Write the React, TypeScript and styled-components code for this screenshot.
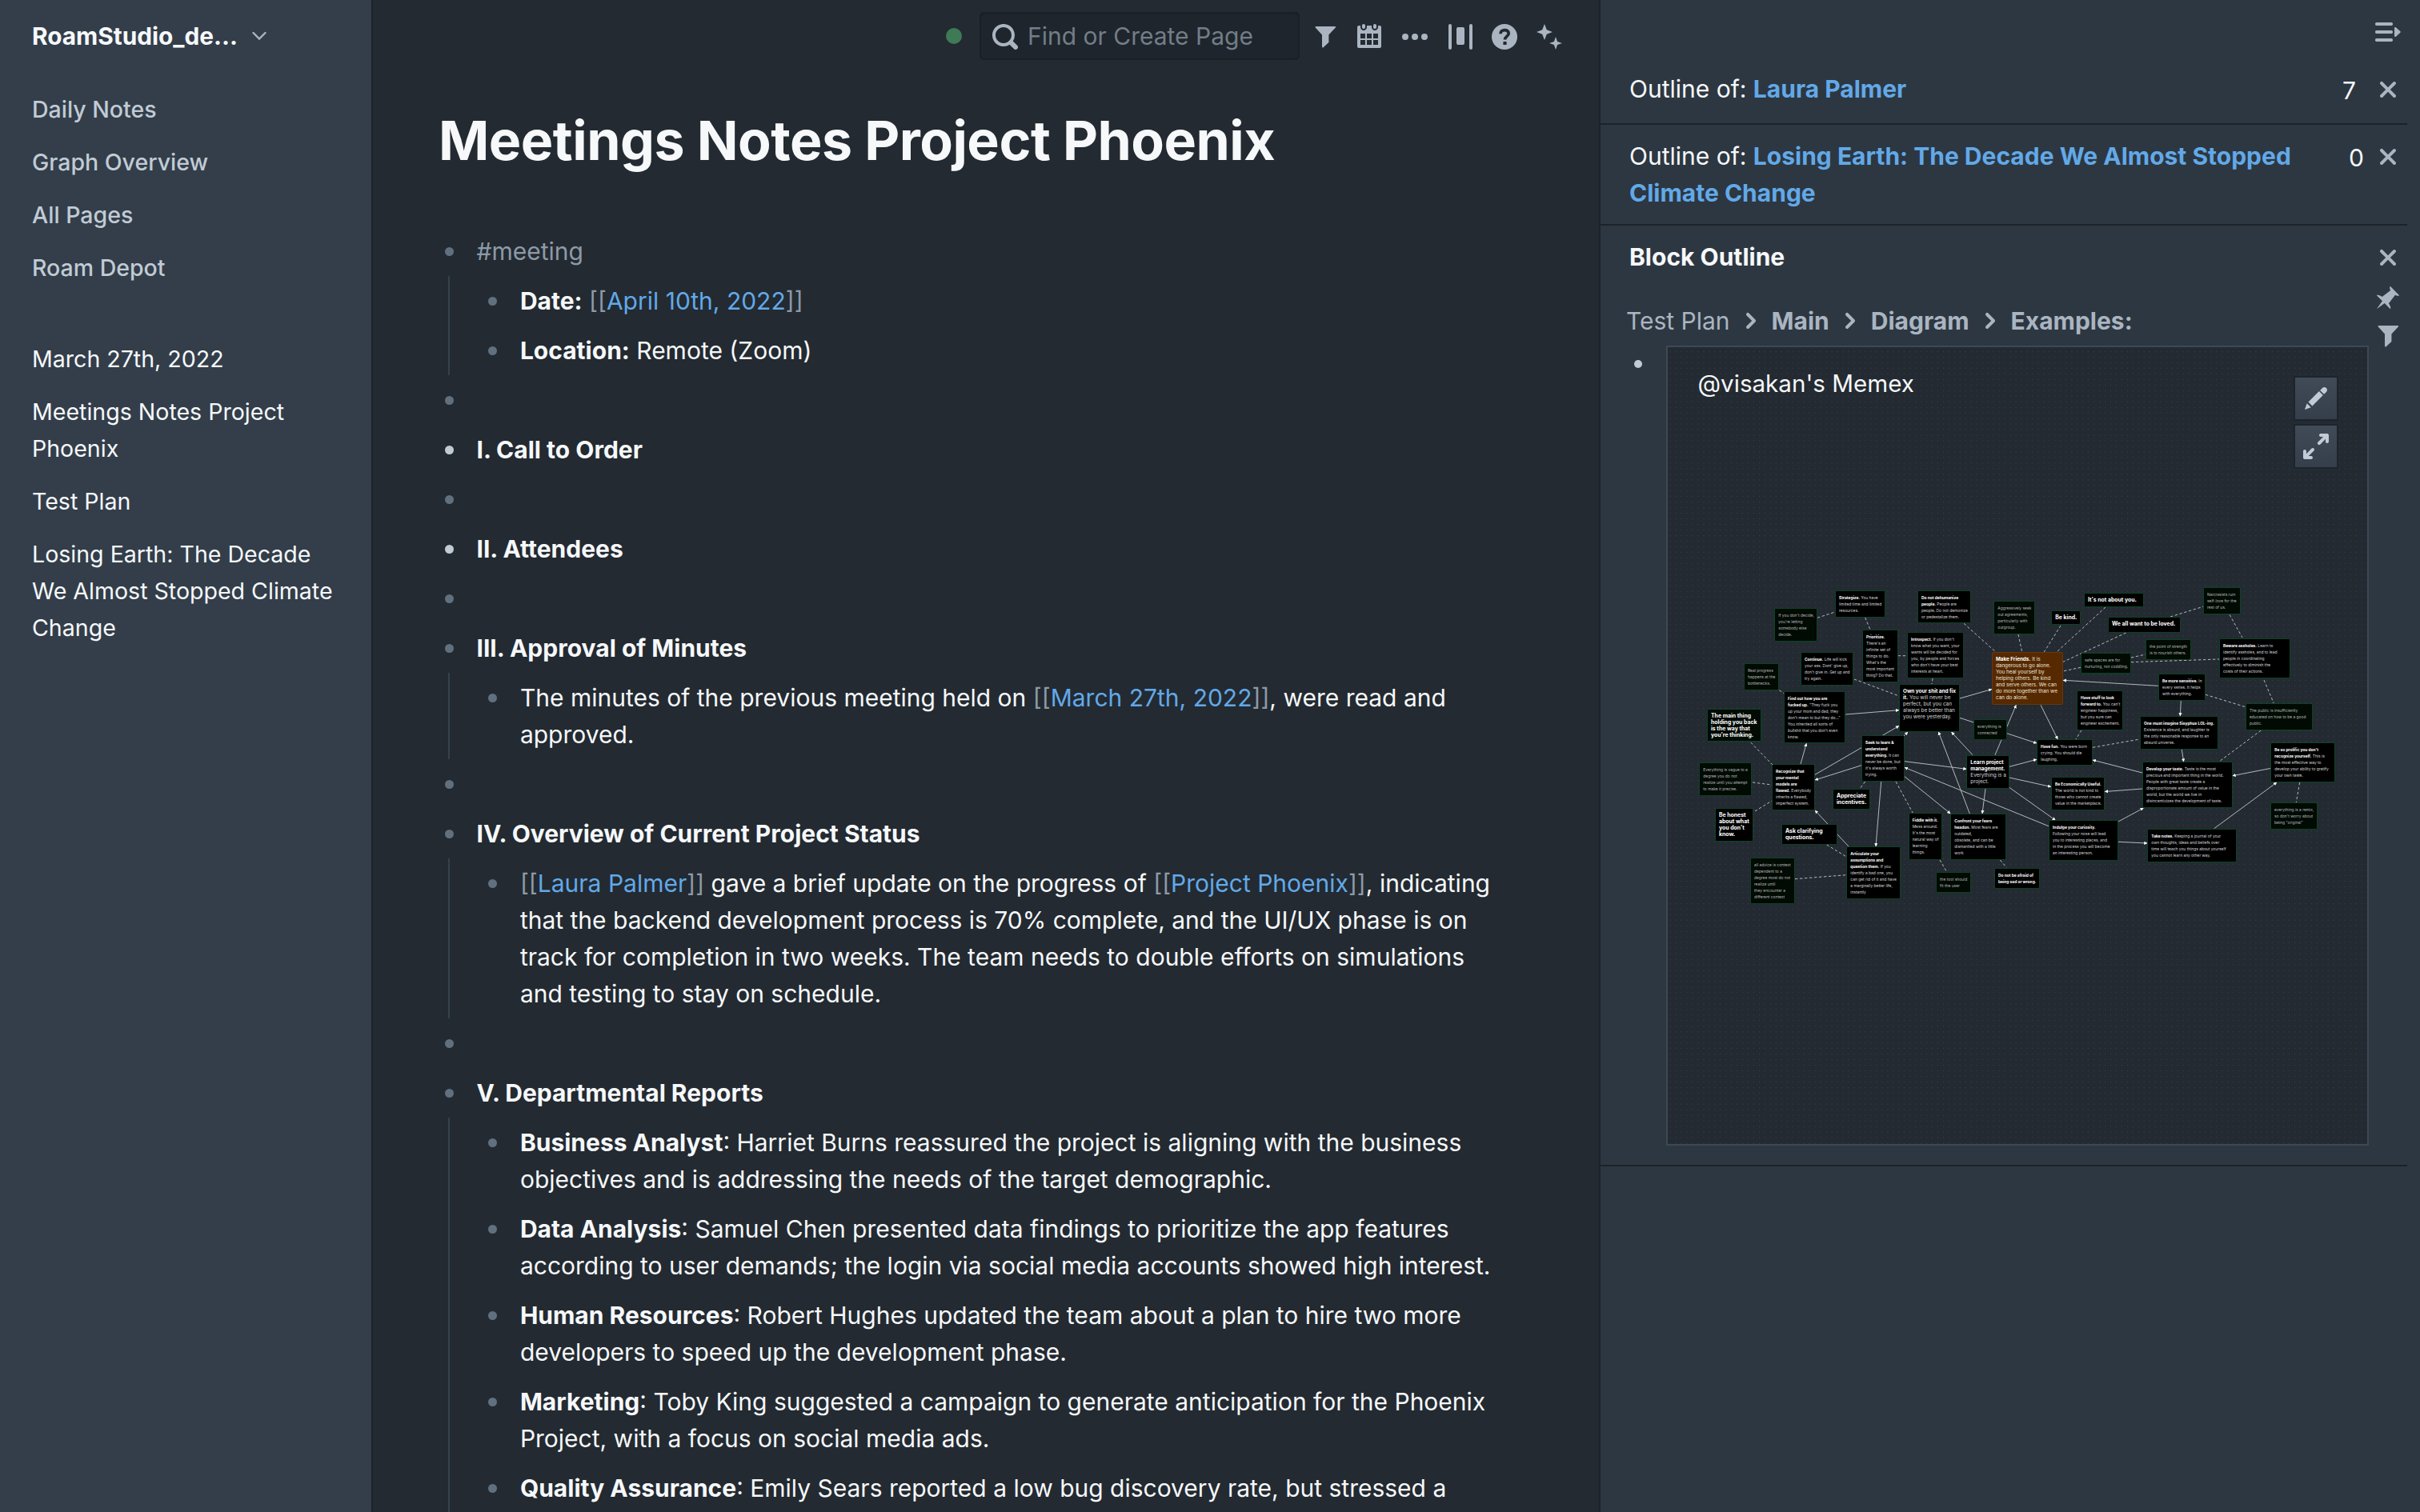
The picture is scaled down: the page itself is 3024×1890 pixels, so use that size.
import React from 'react';
import styled, { createGlobalStyle, css } from 'styled-components';

const c = {
  sidebar: '#333e4a',
  page: '#232a31',
  panel: '#2d3741',
  line: '#1c2228',
  text: '#f6f8fa',
  nav: '#c1cbd5',
  icon: '#aab5c1',
  muted: '#8d9aa7',
  bullet: '#61707f',
  link: '#62a9e8',
};

const GlobalStyle = createGlobalStyle`
  * { box-sizing: border-box; }
  body {
    margin: 0;
    background: ${c.page};
    color: ${c.text};
    font-family: Inter, "Liberation Sans", sans-serif;
    font-size: 30px;
    line-height: 46px;
  }
`;

const Layout = styled.div`
  display: grid;
  grid-template-columns: 466px 1532px 1fr;
  width: 3024px;
  height: 1890px;
  overflow: hidden;
`;

/* ---------- icons ---------- */

const Svg = styled.svg`
  display: block;
  flex: none;
  fill: currentColor;
`;

const paths = {
  search:
    'M15.55 13.43l-2.67-2.68a6.94 6.94 0 001.11-3.76c0-3.87-3.13-7-7-7s-7 3.13-7 7 3.13 7 7 7c1.39 0 2.68-.42 3.76-1.11l2.68 2.67a1.498 1.498 0 102.12-2.12zm-8.56-1.44c-2.76 0-5-2.24-5-5s2.24-5 5-5 5 2.24 5 5-2.24 5-5 5z',
  calendar:
    'M11 3c.6 0 1-.5 1-1V1c0-.6-.4-1-1-1s-1 .4-1 1v1c0 .5.4 1 1 1zm3-2h-1v1c0 1.1-.9 2-2 2s-2-.9-2-2V1H6v1c0 1.1-.9 2-2 2s-2-.9-2-2V1H1c-.6 0-1 .5-1 1v12c0 .6.4 1 1 1h13c.6 0 1-.4 1-1V2c0-.6-.5-1-1-1zM5 13H2v-3h3v3zm0-4H2V6h3v3zm4 4H6v-3h3v3zm0-4H6V6h3v3zm4 4h-3v-3h3v3zm0-4h-3V6h3v3zM4 3c.6 0 1-.5 1-1V1c0-.6-.4-1-1-1S3 .4 3 1v1c0 .5.4 1 1 1z',
  filter: 'M2.2 1.5h11.9a.45 .45 0 01.32 .78L10.2 6.8v4.75l-3 2.75a.6 .6 0 01-1.2-.4V6.8L1.88 2.28a.45 .45 0 01.32-.78z',
  more: 'M2 6.03a2 2 0 100 4 2 2 0 100-4zM14 6.03a2 2 0 100 4 2 2 0 100-4zM8 6.03a2 2 0 100 4 2 2 0 100-4z',
  columns:
    'M2 0a1 1 0 00-1 1v14a1 1 0 002 0V1a1 1 0 00-1-1zM15 0a1 1 0 00-1 1v14a1 1 0 002 0V1a1 1 0 00-1-1zM7 2a1 1 0 00-1 1v9a1 1 0 001 1h3a1 1 0 001-1V3a1 1 0 00-1-1z',
  sparkles:
    'M5 0l1.4 3.6L10 5 6.4 6.4 5 10 3.6 6.4 0 5l3.6-1.4zM12 8l1.05 2.95L16 12l-2.95 1.05L12 16l-1.05-2.95L8 12l2.95-1.05z',
  cross:
    'M9.41 8l3.29-3.29c.19-.18.3-.43.3-.71a1.003 1.003 0 00-1.71-.71L8 6.59l-3.29-3.3a1.003 1.003 0 00-1.42 1.42L6.59 8 3.3 11.29c-.19.18-.3.43-.3.71a1.003 1.003 0 001.71.71L8 9.41l3.29 3.29c.18.19.43.3.71.3a1.003 1.003 0 00.71-1.71L9.41 8z',
  pin: 'M9.41.92c-.51.51-.41 1.5.15 2.56L4.34 7.54C2.8 6.48 1.45 6.05.92 6.58l3.54 3.54-3.54 4.95 4.95-3.54 3.54 3.54c.53-.53.1-1.88-.96-3.42l4.06-5.22c1.06.56 2.04.66 2.55.15L9.41.92z',
  edit: 'M3.25 10.26l2.47 2.47 6.69-6.69-2.46-2.48-6.7 6.7zM.99 14.99l3.86-1.39-2.46-2.44L.99 14.99zm12.25-14c-.48 0-.92.2-1.24.51l-1.44 1.44 2.47 2.47 1.44-1.44c.32-.32.51-.75.51-1.24.01-.95-.77-1.74-1.74-1.74z',
  maximize:
    'M5.99 8.99c-.28 0-.53.11-.71.29l-3.29 3.29v-1.59c0-.55-.45-1-1-1s-1 .45-1 1v4c0 .55.45 1 1 1h4c.55 0 1-.45 1-1s-.45-1-1-1H3.41L6.7 10.7a1.003 1.003 0 00-.71-1.71zm9-9h-4c-.55 0-1 .45-1 1s.45 1 1 1h1.59l-3.3 3.29a1.003 1.003 0 001.42 1.42l3.29-3.29V5c0 .55.45 1 1 1s1-.45 1-1V1c0-.56-.45-1.01-1-1.01z',
  chevronRight:
    'M10.71 7.29l-4-4a1.003 1.003 0 00-1.42 1.42L8.59 8 5.3 11.29c-.19.18-.3.43-.3.71a1.003 1.003 0 001.71.71l4-4c.18-.18.29-.43.29-.71 0-.28-.11-.53-.29-.71z',
};

const Icon = ({ name }: { name: keyof typeof paths }) => (
  <Svg width="32" height="32" viewBox="0 0 16 16">
    <path fillRule="evenodd" d={paths[name]} />
  </Svg>
);

const HelpIcon = () => (
  <Svg width="32" height="32" viewBox="0 0 32 32">
    <circle cx="16" cy="16" r="16" />
    <path d="M11 12.2c0-6 10.2-6 10.2-.4 0 3.6-4.7 3.6-4.7 7.8" fill="none" stroke={c.page} strokeWidth="3.8" />
    <rect x="14.4" y="22" width="4.2" height="4" rx=".6" fill={c.page} />
  </Svg>
);

const MenuOpenIcon = () => (
  <Svg width="32" height="24" viewBox="0 0 32 24">
    <rect width="22" height="4" rx="1.8" />
    <rect y="10" width="22" height="4" rx="1.8" />
    <rect y="20" width="22" height="4" rx="1.8" />
    <path d="M24 7.2a1.2 1.2 0 012-.9l5.4 5a1 1 0 010 1.4l-5.4 5a1.2 1.2 0 01-2-.9z" />
  </Svg>
);

/* ---------- left sidebar ---------- */

const Sidebar = styled.aside`
  display: flex;
  flex-direction: column;
  padding: 22px 40px 0;
  background: ${c.sidebar};
  border-right: 2px solid ${c.line};
  font-size: 28.5px;
`;

const GraphName = styled.div`
  display: flex;
  align-items: center;
  gap: 17px;
  margin-bottom: 46px;
  font-size: 29.8px;
  color: ${c.icon};

  b {
    font-weight: 700;
    color: ${c.text};
  }
`;

const Nav = styled.nav`
  display: flex;
  flex-direction: column;
  gap: 20px;
  margin-bottom: 68px;
  color: ${c.nav};
  font-weight: 500;
`;

const Shortcuts = styled(Nav)`
  margin: 0 -4px 0 0;
  color: ${c.text};
  font-size: 28.55px;
  font-weight: 400;
`;

/* ---------- main column ---------- */

const Main = styled.main`
  display: flex;
  flex-direction: column;
  min-width: 0;
`;

const Toolbar = styled.header`
  display: flex;
  align-items: center;
  justify-content: flex-end;
  height: 90px;
  padding-right: 34px;
  color: ${c.icon};
`;

const StatusDot = styled.span`
  width: 20px;
  height: 20px;
  margin-right: 22px;
  border-radius: 50%;
  background: #3e7a56;
`;

const SearchBox = styled.div`
  display: flex;
  align-items: center;
  gap: 12px;
  width: 400px;
  height: 60px;
  margin-right: 4px;
  padding: 2px 16px 0;
  border-radius: 6px;
  background: #1e252c;
  box-shadow: inset 0 0 0 2px #1a2026, inset 0 2px 2px #171c21;
`;

const Placeholder = styled.span`
  padding-bottom: 2px;
  color: #737d87;
`;

const ToolButton = styled.span`
  display: flex;
  justify-content: center;
  width: 56px;
  padding-top: 2px;
`;

const Title = styled.h1`
  margin: 44px 0 67px 82px;
  font-size: 68px;
  font-weight: 700;
  letter-spacing: -0.5px;
  line-height: 82px;
`;

const Blocks = styled.div`
  display: flex;
  flex-direction: column;
  width: 1412px;
  padding-left: 67px;
`;

const Children = styled.div`
  margin-left: 27px;
  padding-left: 25.4px;
  border-left: 2px solid #35414c;
`;

const Row = styled.div`
  display: flex;
  min-height: 62px;
  padding: 8px 0;
`;

const Bullet = styled.span<{ $bright?: boolean }>`
  flex: none;
  width: 11px;
  height: 11px;
  margin: 17.5px 29px 0 22.5px;
  border-radius: 50%;
  background: ${(p) => (p.$bright ? c.nav : c.bullet)};
`;

const Text = styled.div`
  flex: 1;
  min-width: 0;

  b {
    font-weight: 700;
  }
`;

const Tag = styled.span`
  color: ${c.muted};
`;

const Link = styled.span`
  color: ${c.link};
`;

const Ref = ({ children }: { children: React.ReactNode }) => (
  <>
    <Tag>[[</Tag>
    <Link>{children}</Link>
    <Tag>]]</Tag>
  </>
);

const Block = ({ children, bright }: { children?: React.ReactNode; bright?: boolean }) => (
  <Row>
    <Bullet $bright={bright} />
    <Text>{children}</Text>
  </Row>
);

/* ---------- right panel ---------- */

const Panel = styled.aside`
  display: flex;
  flex-direction: column;
  padding-right: 16px;
  background: ${c.panel};
  border-left: 2px solid ${c.line};
`;

const PanelTop = styled.div`
  display: flex;
  justify-content: flex-end;
  height: 72px;
  padding: 28px 8px 0 0;
  color: ${c.icon};
`;

const Section = styled.section<{ $min?: number }>`
  min-height: ${(p) => p.$min ?? 0}px;
  padding: 16px 8px 16px 36px;
  border-bottom: 2px solid ${c.line};
`;

const SectionHead = styled.div`
  display: flex;
  align-items: flex-start;
`;

const SectionTitle = styled.div`
  flex: 1;
  padding-right: 70px;

  b {
    font-weight: 700;
  }

  ${Link} {
    font-weight: 700;
  }
`;

const Count = styled.span<{ $gap: number }>`
  margin: 2px ${(p) => p.$gap}px 0 -40px;
`;

const Close = styled.span`
  display: flex;
  padding-top: 8px;
  color: ${c.icon};
`;

const Crumbs = styled.div`
  display: flex;
  align-items: center;
  gap: 10px;
  flex: 1;
  margin: 34px 0 0 -4px;
  height: 46px;
  color: ${c.icon};

  b {
    font-weight: 700;
  }
`;

const CrumbRow = styled.div`
  display: flex;
  height: 88px;
`;

const SideActions = styled.div`
  display: flex;
  flex-direction: column;
  gap: 16px;
  padding-top: 12px;
  color: ${c.icon};
`;

const DiagramRow = styled.div`
  display: flex;
`;

const OutlineDot = styled.span`
  flex: none;
  width: 10px;
  height: 10px;
  margin: 18px 30px 0 6px;
  border-radius: 50%;
  background: ${c.nav};
`;

const Diagram = styled.div`
  position: relative;
  width: 878px;
  height: 1000px;
  border: 2px solid #3b4955;
  background-color: ${c.page};
  background-image: radial-gradient(circle at 50% 50%, #3b444c 0.6px, transparent 0.9px);
  background-size: 6.97px 6.97px;
  background-position: -0.5px 2px;
`;

const DiagramTitle = styled.div`
  position: absolute;
  left: 37.5px;
  top: 22px;
  font-size: 29.6px;
`;

const DiagramTools = styled.div`
  position: absolute;
  top: 36px;
  right: 36px;
  display: flex;
  flex-direction: column;
  gap: 4px;
`;

const DiagramButton = styled.span`
  display: flex;
  align-items: center;
  justify-content: center;
  width: 56px;
  height: 56px;
  border: 2px solid #1d242b;
  background: linear-gradient(#404b57, #353f4b);
  color: ${c.nav};
`;

const Wires = styled.svg`
  position: absolute;
  inset: 0;
  fill: none;
  stroke: #bcc1c6;
  stroke-width: 0.95;
`;

type Tone = 'solid' | 'faint' | 'hot';

const tones = {
  solid: css`
    background: #000;
    border-color: #0c4325;
    color: #d4d6d8;
  `,
  faint: css`
    background: #010a03;
    border-color: #0c4325;
    color: #b4b8b9;
  `,
  hot: css`
    background: #562900;
    border-color: #673711;
    color: #ece5de;
  `,
};

const Note = styled.div<{ $x: number; $y: number; $w: number; $h: number; $size: number; $tone: Tone }>`
  position: absolute;
  left: ${(p) => p.$x}px;
  top: ${(p) => p.$y}px;
  width: ${(p) => p.$w}px;
  height: ${(p) => p.$h}px;
  padding: 4px 0 0 4px;
  border: 1px solid;
  border-radius: 2px;
  font-size: ${(p) => p.$size}px;
  line-height: 8px;
  white-space: pre;
  ${(p) => tones[p.$tone]}

  b {
    font-weight: 700;
    color: #fff;
  }
`;

const ORIGIN = { x: 2084, y: 434 };

type NoteData = [number, number, number, number, Tone, number, string, string];

/* x1, y1, x2, y2, tone, font size, bold lead, body */
const notes: NoteData[] = [
  [2217.3, 760, 2271.3, 801.7, 'faint', 4.9, '', "If you don't decide,\nyou're letting\nsomebody else\ndecide."],
  [2293, 738, 2356, 772, 'solid', 4.9, 'Strategize.', ' You have\nlimited time and limited\nresources.'],
  [2327, 787, 2372, 853, 'solid', 4.9, 'Prioritize.', "\nThere's an\ninfinite set of\nthings to do.\nWhat's the\nmost important\nthing? Do that."],
  [2250, 815, 2316, 857, 'solid', 4.9, 'Continue.', " Life will kick\nyour ass. Dont' give up,\ndon't give in. Get up and\ntry again."],
  [2179, 829, 2223.3, 863, 'faint', 4.9, '', 'Real progress\nhappens at the\nbottlenecks.'],
  [2229, 863.5, 2306.3, 929.3, 'solid', 4.9, 'Find out how you are\nfucked up.', ' "They fuck you\nup your mom and dad, they\ndon\'t mean to but they do..."\nYou inherited all sorts of\nbullshit that you don\'t even\nknow.'],
  [2133, 885.5, 2201.3, 927.3, 'faint', 6.9, "The main thing\nholding you back\nis the way that\nyou're thinking.", ''],
  [2373, 855, 2449, 914.7, 'solid', 6.4, 'Own your shit and fix\nit.', ' You will never be\nperfect, but you can\nalways be better than\nyou were yesterday.'],
  [2326, 919.3, 2380, 977, 'solid', 4.9, 'Seek to learn &\nunderstand\neverything.', " It can\nnever be done, but\nit's always worth\ntrying."],
  [2396, 737.5, 2463, 779, 'solid', 4.9, 'Do not dehumanize\npeople.', ' People are\npeople. Do not demonize\nor pedestalize them.'],
  [2383, 790.4, 2454, 848, 'solid', 4.9, 'Introspect.', " If you don't\nknow what you want, your\nwants will be decided for\nyou, by people and forces\nwho don't have your best\ninterests at heart."],
  [2491.3, 751, 2543.3, 793, 'faint', 4.9, '', 'Aggressively seek\nout agreements,\nparticularly with\noutgroup.'],
  [2563.3, 763, 2600.3, 781, 'solid', 6.9, 'Be kind.', ''],
  [2604, 740.7, 2679.3, 759, 'solid', 6.9, "It's not about you.", ''],
  [2634, 771, 2724.7, 791, 'solid', 6.9, 'We all want to be loved.', ''],
  [2600, 816, 2663, 842, 'faint', 4.9, '', 'safe spaces are for\nnurturing, not coddling.'],
  [2681, 799, 2738, 825, 'faint', 4.9, '', 'the point of strength\nis to nourish others.'],
  [2489, 815, 2578, 881.3, 'hot', 6.3, 'Make Friends.', ' It is\ndangerous to go alone.\nYou heal yourself by\nhelping others. Be kind\nand serve others. We can\ndo more together than we\ncan do alone.'],
  [2466, 899.3, 2508, 925, 'faint', 4.9, '', 'everything is\nconnected'],
  [2595, 863, 2653, 912.7, 'solid', 4.9, 'Have stuff to look\nforward to.', " You can't\nengineer happiness,\nbut you sure can\nengineer excitement."],
  [2545, 924, 2615, 957.3, 'solid', 4.9, 'Have fun.', ' You were born\ncrying. You should die\nlaughing.'],
  [2674, 895, 2772, 937, 'solid', 4.9, 'One must imagine Sisyphus LOL-ing.', '\nExistence is absurd, and laughter is\nthe only reasonable response to an\nabsurd universe.'],
  [2697, 842, 2756, 876, 'solid', 4.9, 'Be more sensitive.', ' In\nevery sense. It helps\nwith everything.'],
  [2753, 734, 2800, 768, 'faint', 4.9, '', 'Narcissists ruin\nself-love for the\nrest of us.'],
  [2773, 798, 2862, 848, 'solid', 4.9, 'Beware assholes.', ' Learn to\nidentify assholes, and to lead\npeople in coordinating\neffectively to diminish the\ncosts of their actions.'],
  [2806, 879, 2890, 913, 'faint', 4.9, '', 'The public is insufficiently\neducated on how to be a good\npublic.'],
  [2837.3, 928, 2918, 978, 'solid', 4.9, "Be so prolific you don't\nrecognize yourself.", ' This is\nthe most effective way to\ndevelop your ability to gratify\nyour own taste.'],
  [2123.3, 953, 2189, 994.7, 'faint', 4.9, '', 'Everything is vague to a\ndegree you do not\nrealize until you attempt\nto make it precise.'],
  [2214, 955.4, 2268, 1012.7, 'solid', 4.9, 'Recognize that\nyour mental\nmodels are\nflawed.', ' Everybody\ninherits a flawed,\nimperfect system.'],
  [2143, 1010, 2191, 1052, 'solid', 6.9, "Be honest\nabout what\nyou don't\nknow.", ''],
  [2226, 1030, 2296, 1056, 'solid', 6.9, 'Ask clarifying\nquestions.', ''],
  [2290, 986, 2337.3, 1011.7, 'solid', 6.9, 'Appreciate\nincentives.', ''],
  [2187, 1071.7, 2243, 1129.7, 'faint', 4.9, '', 'all advice is context\ndependent to a\ndegree most do not\nrealize until\nthey encounter a\ndifferent context'],
  [2307.3, 1058.4, 2375, 1124, 'solid', 4.9, 'Articulate your\nassumptions and\nquestion them.', ' If you\nidentify a bad one, you\ncan get rid of it and have\na marginally better life,\ninstantly'],
  [2384.7, 1016.4, 2427, 1074.7, 'solid', 4.9, 'Fiddle with it.', "\nMess around.\nIt's the most\nnatural way of\nlearning\nthings."],
  [2457.3, 943.7, 2511, 986, 'solid', 6.4, 'Learn project\nmanagement.', '\nEverything is a\nproject.'],
  [2437.3, 1017.3, 2507.3, 1075, 'solid', 4.9, 'Confront your fears\nheadon.', ' Most fears are\noutdated,\nobsolete, and can be\ndismantled with a little\nwork'],
  [2419, 1090.3, 2463.3, 1116, 'faint', 4.9, '', 'the tool should\nfit the user'],
  [2492, 1085.3, 2549.3, 1111.3, 'solid', 4.9, 'Do not be afraid of\nbeing sad or wrong.', ''],
  [2563, 971.3, 2630, 1013, 'solid', 4.9, 'Be Economically Useful.', '\nThe world is not kind to\nthose who cannot create\nvalue in the marketplace.'],
  [2560, 1025.4, 2647, 1075.7, 'solid', 4.9, 'Indulge your curiosity.', '\nFollowing your nose will lead\nyou to interesting places, and\nin the process you will become\nan interesting person.'],
  [2677, 952.3, 2789.7, 1010, 'solid', 4.9, 'Develop your taste.', ' Taste is the most\nprecious and important thing in the world.\nPeople with great taste create a\ndisproportionate amount of value in the\nworld, but the world we live in\ndisincentivizes the development of taste.'],
  [2683.3, 1036, 2795, 1078, 'solid', 4.9, 'Take notes.', ' Keeping a journal of your\nown thoughts, ideas and beliefs over\ntime will teach you things about yourself\nyou cannot learn any other way.'],
  [2837, 1003.3, 2896, 1037, 'faint', 4.9, '', 'everything is a remix,\nso don\'t worry about\nbeing "original"'],
];

const dashed = [
  [2271, 772.3, 2293, 765], [2330.7, 772, 2337, 787], [2371.7, 819.7, 2383, 819.7], [2317, 849, 2373, 870],
  [2223.3, 862.7, 2229, 866.7], [2187.7, 928, 2215, 956], [2454, 779.3, 2494, 815], [2522, 793, 2526.7, 815],
  [2575, 782, 2554.3, 815], [2631, 759, 2570, 815], [2656.7, 791, 2578, 827.3], [2600, 834.3, 2578, 839],
  [2663, 822, 2681, 818], [2663, 827.7, 2773, 824], [2415, 848, 2414, 855], [2601, 912.7, 2594, 924],
  [2615, 934.3, 2674, 924], [2712, 771, 2753, 758.3], [2786, 768.3, 2802, 797], [2829, 850, 2841.3, 879],
  [2756, 868.3, 2806, 883.7], [2825.3, 913, 2773, 952], [2873.7, 978, 2869.3, 1003], [2190, 978, 2214, 981],
  [2193, 1014, 2214, 1001], [2282.7, 1056, 2307.3, 1071], [2243, 1098.7, 2307.3, 1093.7], [2330.7, 977, 2324, 986],
  [2369, 977, 2390.7, 1017], [2424, 1075, 2432.7, 1090], [2499.3, 1075, 2507.3, 1084.5],
];

const arrows = [
  [2306.3, 893, 2373, 887.7], [2268, 968.3, 2373, 907.3], [2379, 920, 2384, 915], [2250, 955, 2257.3, 929.3],
  [2697, 857.3, 2578, 850.3], [2449, 873, 2489, 861.5], [2449, 897.3, 2545, 929], [2493, 943.7, 2519.3, 881.3],
  [2550, 881.3, 2571.3, 924], [2461.3, 1017, 2422.3, 914.7], [2465, 943.7, 2438.5, 915], [2725.3, 876, 2724.3, 895],
  [2726.3, 937, 2728.7, 952.3], [2838, 960.3, 2789.7, 969.7], [2766.7, 1035.7, 2845, 978], [2326, 956.7, 2268, 975],
  [2310, 1058, 2268, 1013], [2350.7, 977, 2344, 1058], [2380, 951.7, 2457.3, 961.3], [2560, 1032.7, 2380, 959.3],
  [2380, 970.7, 2437.3, 1017], [2511, 958.3, 2545, 949.3], [2511, 972, 2563, 983.5], [2510.3, 984, 2568.5, 1025.3],
  [2481, 986, 2477, 1017], [2677, 966, 2615, 950], [2677, 986, 2630, 989.5], [2647, 1027, 2678.5, 1010],
  [2647, 1052.3, 2683.3, 1054],
];

const Memex = () => (
  <Diagram>
    <Wires width="874" height="996" viewBox={`${ORIGIN.x} ${ORIGIN.y} 874 996`}>
      <defs>
        <marker id="head" viewBox="0 0 4 4" refX="3.8" refY="2" markerWidth="4.2" markerHeight="4.2" markerUnits="userSpaceOnUse" orient="auto">
          <path d="M0 0l4 2-4 2z" fill="#fff" stroke="none" />
        </marker>
      </defs>
      {dashed.map(([x1, y1, x2, y2], i) => (
        <line key={i} x1={x1} y1={y1} x2={x2} y2={y2} strokeDasharray="3.4 2.6" />
      ))}
      {arrows.map(([x1, y1, x2, y2], i) => (
        <line key={i} x1={x1} y1={y1} x2={x2} y2={y2} markerEnd="url(#head)" />
      ))}
    </Wires>
    {notes.map(([x1, y1, x2, y2, tone, size, lead, body]) => (
      <Note key={lead + body} $x={x1 - ORIGIN.x} $y={y1 - ORIGIN.y} $w={x2 - x1} $h={y2 - y1} $size={size} $tone={tone}>
        {lead && <b>{lead}</b>}
        {body}
      </Note>
    ))}
    <DiagramTitle>@visakan's Memex</DiagramTitle>
    <DiagramTools>
      <DiagramButton><Icon name="edit" /></DiagramButton>
      <DiagramButton><Icon name="maximize" /></DiagramButton>
    </DiagramTools>
  </Diagram>
);

export default function App() {
  return (
    <Layout>
      <GlobalStyle />
      <Sidebar>
        <GraphName>
          <b>RoamStudio_de...</b>
          <Svg width="20" height="14" viewBox="0 0 20 14">
            <path d="M2.5 3l7.5 7.5L17.5 3" fill="none" stroke="currentColor" strokeWidth="2.4" strokeLinecap="round" />
          </Svg>
        </GraphName>
        <Nav>
          <span>Daily Notes</span>
          <span>Graph Overview</span>
          <span>All Pages</span>
          <span>Roam Depot</span>
        </Nav>
        <Shortcuts>
          <span>March 27th, 2022</span>
          <span>Meetings Notes Project Phoenix</span>
          <span>Test Plan</span>
          <span>Losing Earth: The Decade We Almost Stopped Climate Change</span>
        </Shortcuts>
      </Sidebar>

      <Main>
        <Toolbar>
          <StatusDot />
          <SearchBox>
            <Icon name="search" />
            <Placeholder>Find or Create Page</Placeholder>
          </SearchBox>
          <ToolButton><Icon name="filter" /></ToolButton>
          <ToolButton><Icon name="calendar" /></ToolButton>
          <ToolButton><Icon name="more" /></ToolButton>
          <ToolButton><Icon name="columns" /></ToolButton>
          <ToolButton><HelpIcon /></ToolButton>
          <ToolButton><Icon name="sparkles" /></ToolButton>
        </Toolbar>
        <Title>Meetings Notes Project Phoenix</Title>
        <Blocks>
          <Block><Tag>#meeting</Tag></Block>
          <Children>
            <Block><b>Date:</b> <Ref>April 10th, 2022</Ref></Block>
            <Block><b>Location:</b> Remote (Zoom)</Block>
          </Children>
          <Block />
          <Block bright><b>I. Call to Order</b></Block>
          <Block />
          <Block bright><b>II. Attendees</b></Block>
          <Block />
          <Block><b>III. Approval of Minutes</b></Block>
          <Children>
            <Block>The minutes of the previous meeting held on <Ref>March 27th, 2022</Ref>, were read and approved.</Block>
          </Children>
          <Block />
          <Block><b>IV. Overview of Current Project Status</b></Block>
          <Children>
            <Block>
              <Ref>Laura Palmer</Ref> gave a brief update on the progress of <Ref>Project Phoenix</Ref>, indicating that the backend
              development process is 70% complete, and the UI/UX phase is on track for completion in two weeks. The team needs to
              double efforts on simulations and testing to stay on schedule.
            </Block>
          </Children>
          <Block />
          <Block><b>V. Departmental Reports</b></Block>
          <Children>
            <Block>
              <b>Business Analyst</b>: Harriet Burns reassured the project is aligning with the business objectives and is addressing
              the needs of the target demographic.
            </Block>
            <Block>
              <b>Data Analysis</b>: Samuel Chen presented data findings to prioritize the app features according to user demands; the
              login via social media accounts showed high interest.
            </Block>
            <Block>
              <b>Human Resources</b>: Robert Hughes updated the team about a plan to hire two more developers to speed up the
              development phase.
            </Block>
            <Block>
              <b>Marketing</b>: Toby King suggested a campaign to generate anticipation for the Phoenix Project, with a focus on
              social media ads.
            </Block>
            <Block>
              <b>Quality Assurance</b>: Emily Sears reported a low bug discovery rate, but stressed a
            </Block>
          </Children>
        </Blocks>
      </Main>

      <Panel>
        <PanelTop><MenuOpenIcon /></PanelTop>
        <Section $min={84}>
          <SectionHead>
            <SectionTitle>Outline of: <Link>Laura Palmer</Link></SectionTitle>
            <Count $gap={24}>7</Count>
            <Close><Icon name="cross" /></Close>
          </SectionHead>
        </Section>
        <Section>
          <SectionHead>
            <SectionTitle>Outline of: <Link>Losing Earth: The Decade We Almost Stopped Climate Change</Link></SectionTitle>
            <Count $gap={14}>0</Count>
            <Close><Icon name="cross" /></Close>
          </SectionHead>
        </Section>
        <Section $min={1176}>
          <SectionHead>
            <SectionTitle><b>Block Outline</b></SectionTitle>
            <Close><Icon name="cross" /></Close>
          </SectionHead>
          <CrumbRow>
            <Crumbs>
              Test Plan <Icon name="chevronRight" /> <b>Main</b> <Icon name="chevronRight" /> <b>Diagram</b>{' '}
              <Icon name="chevronRight" /> <b>Examples:</b>
            </Crumbs>
            <SideActions>
              <Icon name="pin" />
              <Icon name="filter" />
            </SideActions>
          </CrumbRow>
          <DiagramRow>
            <OutlineDot />
            <Memex />
          </DiagramRow>
        </Section>
      </Panel>
    </Layout>
  );
}
